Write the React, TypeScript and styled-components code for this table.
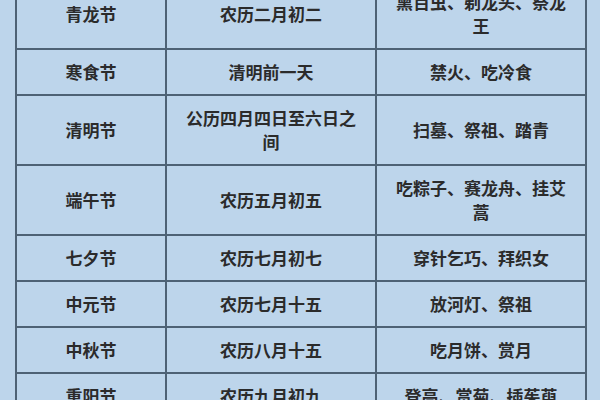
import React from "react";
import styled, { createGlobalStyle } from "styled-components";

const Global = createGlobalStyle`
  html, body {
    margin: 0;
    padding: 0;
    background: #bdd5eb;
    overflow: hidden;
  }
  body {
    font-family: "Noto Sans CJK SC", "Noto Sans", sans-serif;
  }
`;

const Page = styled.div`
  width: 600px;
  height: 400px;
  background: #bdd5eb;
  padding-left: 15px;
  box-sizing: border-box;
  overflow: hidden;
`;

const Table = styled.table`
  margin-top: -22px;
  width: 570px;
  border-collapse: collapse;
  table-layout: fixed;
  background: #bdd5eb;
`;

const Col = styled.col<{ $w: number }>`
  width: ${(p) => p.$w}px;
`;

const Cell = styled.td`
  border: 2px solid #4e6275;
  padding: 10px 14px;
  text-align: center;
  vertical-align: middle;
  font-size: 17px;
  line-height: 24px;
  font-weight: 700;
  color: #2b2b2b;
  word-break: break-all;
`;

const rows: [string, string, string][] = [
  ["青龙节", "农历二月初二", "熏百虫、剃龙头、祭龙王"],
  ["寒食节", "清明前一天", "禁火、吃冷食"],
  ["清明节", "公历四月四日至六日之间", "扫墓、祭祖、踏青"],
  ["端午节", "农历五月初五", "吃粽子、赛龙舟、挂艾蒿"],
  ["七夕节", "农历七月初七", "穿针乞巧、拜织女"],
  ["中元节", "农历七月十五", "放河灯、祭祖"],
  ["中秋节", "农历八月十五", "吃月饼、赏月"],
  ["重阳节", "农历九月初九", "登高、赏菊、插茱萸"],
];

export default function App() {
  return (
    <>
      <Global />
      <Page>
        <Table>
          <colgroup>
            <Col $w={150} />
            <Col $w={210} />
            <Col $w={210} />
          </colgroup>
          <tbody>
            {rows.map((r) => (
              <tr key={r[0]}>
                <Cell>{r[0]}</Cell>
                <Cell>{r[1]}</Cell>
                <Cell>{r[2]}</Cell>
              </tr>
            ))}
          </tbody>
        </Table>
      </Page>
    </>
  );
}
